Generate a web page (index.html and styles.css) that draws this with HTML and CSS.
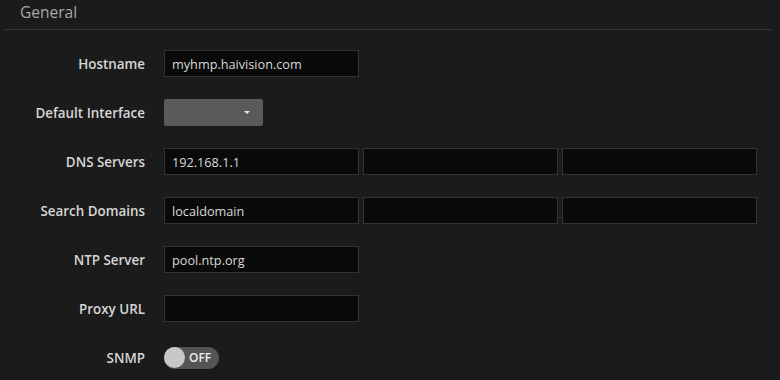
FILE: index.html
```html
<!DOCTYPE html>
<html lang="en">
<head>
    <meta charset="UTF-8">
    <title>General</title>
    <link rel="stylesheet" href="styles.css">
</head>
<body>

<div class="section">
    <div class="section-title">General</div>

    <div class="form">
        <label class="form-label">Hostname</label>
        <div class="form-fields">
            <input type="text" class="text-input" value="myhmp.haivision.com">
        </div>

        <label class="form-label">Default Interface</label>
        <div class="form-fields">
            <div class="select-box"><span class="caret"></span></div>
        </div>

        <label class="form-label">DNS Servers</label>
        <div class="form-fields">
            <input type="text" class="text-input" value="192.168.1.1">
            <input type="text" class="text-input">
            <input type="text" class="text-input">
        </div>

        <label class="form-label">Search Domains</label>
        <div class="form-fields">
            <input type="text" class="text-input" value="localdomain">
            <input type="text" class="text-input">
            <input type="text" class="text-input">
        </div>

        <label class="form-label">NTP Server</label>
        <div class="form-fields">
            <input type="text" class="text-input" value="pool.ntp.org">
        </div>

        <label class="form-label">Proxy URL</label>
        <div class="form-fields">
            <input type="text" class="text-input">
        </div>

        <label class="form-label">SNMP</label>
        <div class="form-fields">
            <div class="toggle">
                <span class="toggle-knob"></span>
                <span class="toggle-text">OFF</span>
            </div>
        </div>
    </div>
</div>

</body>
</html>
```

FILE: styles.css
```css
html, body {
    margin: 0;
    padding: 0;
    background-color: #1b1b1b;
    font-family: "Open Sans", "Liberation Sans", sans-serif;
}

.section {
    margin: 0 7px 0 4px;
}

.section-title {
    height: 29px;
    line-height: 25px;
    padding-left: 16px;
    font-size: 15.5px;
    color: #a7a7a7;
    border-bottom: 1px solid #333333;
}

.form {
    display: grid;
    grid-template-columns: 141px auto;
    column-gap: 19px;
    row-gap: 22px;
    padding-top: 20px;
    align-items: center;
}

.form-label {
    text-align: right;
    font-size: 13.4px;
    font-weight: 600;
    color: #d6d6d6;
}

.form-fields {
    display: flex;
    gap: 4px;
    height: 27px;
    align-items: center;
}

.text-input {
    box-sizing: border-box;
    width: 195px;
    height: 27px;
    margin: 0;
    padding: 0 7px;
    background-color: #0a0a0a;
    border: 1px solid #333333;
    color: #d8d8d8;
    font-family: "Open Sans", "Liberation Sans", sans-serif;
    font-size: 12.7px;
    outline: none;
}

.select-box {
    position: relative;
    width: 99px;
    height: 27px;
    background-color: #5a5a5a;
    border-radius: 2px;
}

.caret {
    position: absolute;
    left: 80px;
    top: 12px;
    width: 0;
    height: 0;
    border-left: 3px solid transparent;
    border-right: 3px solid transparent;
    border-top: 3px solid #e6e6e6;
}

.toggle {
    display: flex;
    align-items: center;
    width: 55px;
    height: 22px;
    border-radius: 11px;
    background-color: #545454;
}

.toggle-knob {
    width: 21px;
    height: 21px;
    border-radius: 50%;
    background-color: #c8c8c8;
}

.toggle-text {
    margin-left: 4px;
    font-size: 12px;
    font-weight: 600;
    color: #ececec;
}
```
